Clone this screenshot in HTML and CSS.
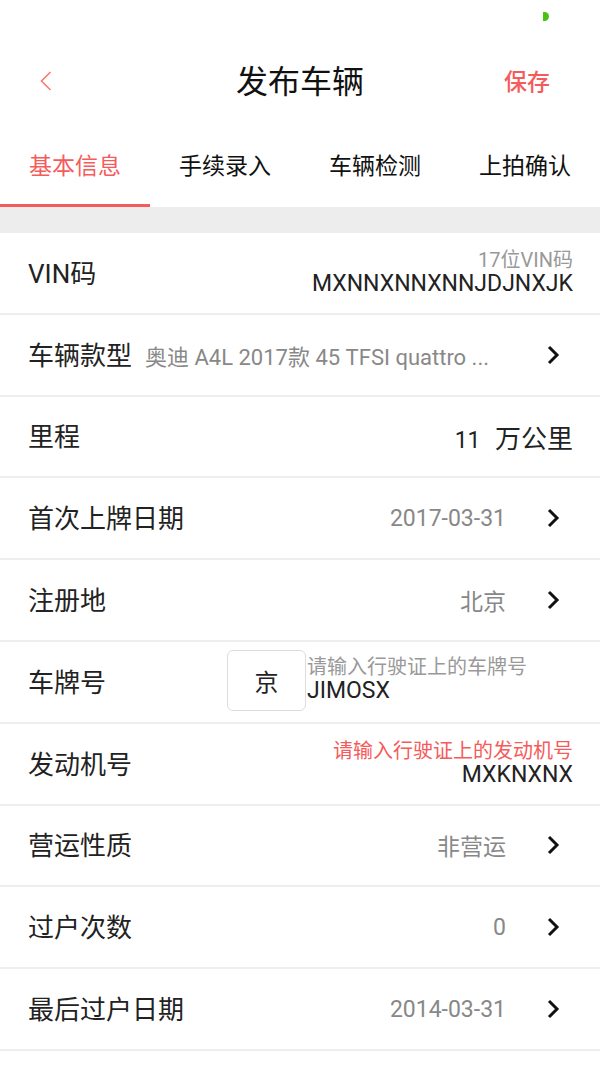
FILE: index.html
```html
<!DOCTYPE html>
<html lang="zh-CN">
<head>
  <meta charset="UTF-8">
  <title>发布车辆</title>
  <link rel="stylesheet" href="styles.css">
</head>
<body>
  <div class="statusbar">
    <span class="battery"></span>
  </div>

  <div class="header">
    <div class="back">
      <svg width="12" height="20" viewBox="0 0 12 20">
        <polyline points="10.5,1 1.5,10 10.5,19" fill="none" stroke="#fa7b6c" stroke-width="1.6"/>
      </svg>
    </div>
    <h1>发布车辆</h1>
    <div class="save">保存</div>
  </div>

  <div class="tabs">
    <div class="tab active">基本信息</div>
    <div class="tab">手续录入</div>
    <div class="tab">车辆检测</div>
    <div class="tab">上拍确认</div>
  </div>

  <div class="gap"></div>

  <div class="form">
    <div class="row">
      <span class="label">VIN码</span>
      <div class="stack">
        <span class="hint">17位VIN码</span>
        <span class="input">MXNNXNNXNNJDJNXJK</span>
      </div>
    </div>

    <div class="row">
      <span class="label tight">车辆款型</span>
      <span class="value model">奥迪 A4L 2017款 45 TFSI quattro ...</span>
      <svg class="arrow" width="14" height="22" viewBox="0 0 14 22">
        <polyline points="3,3 11,11 3,19" fill="none" stroke="#111" stroke-width="3"/>
      </svg>
    </div>

    <div class="row">
      <span class="label">里程</span>
      <span class="mileage"><b>11</b> 万公里</span>
    </div>

    <div class="row">
      <span class="label">首次上牌日期</span>
      <span class="value">2017-03-31</span>
      <svg class="arrow" width="14" height="22" viewBox="0 0 14 22">
        <polyline points="3,3 11,11 3,19" fill="none" stroke="#111" stroke-width="3"/>
      </svg>
    </div>

    <div class="row">
      <span class="label">注册地</span>
      <span class="value">北京</span>
      <svg class="arrow" width="14" height="22" viewBox="0 0 14 22">
        <polyline points="3,3 11,11 3,19" fill="none" stroke="#111" stroke-width="3"/>
      </svg>
    </div>

    <div class="row">
      <span class="label plate-label">车牌号</span>
      <div class="province">京</div>
      <div class="stack left">
        <span class="hint">请输入行驶证上的车牌号</span>
        <span class="input">JIMOSX</span>
      </div>
    </div>

    <div class="row">
      <span class="label">发动机号</span>
      <div class="stack">
        <span class="hint warn">请输入行驶证上的发动机号</span>
        <span class="input">MXKNXNX</span>
      </div>
    </div>

    <div class="row">
      <span class="label">营运性质</span>
      <span class="value">非营运</span>
      <svg class="arrow" width="14" height="22" viewBox="0 0 14 22">
        <polyline points="3,3 11,11 3,19" fill="none" stroke="#111" stroke-width="3"/>
      </svg>
    </div>

    <div class="row">
      <span class="label">过户次数</span>
      <span class="value">0</span>
      <svg class="arrow" width="14" height="22" viewBox="0 0 14 22">
        <polyline points="3,3 11,11 3,19" fill="none" stroke="#111" stroke-width="3"/>
      </svg>
    </div>

    <div class="row">
      <span class="label">最后过户日期</span>
      <span class="value">2014-03-31</span>
      <svg class="arrow" width="14" height="22" viewBox="0 0 14 22">
        <polyline points="3,3 11,11 3,19" fill="none" stroke="#111" stroke-width="3"/>
      </svg>
    </div>
  </div>
</body>
</html>
```

FILE: styles.css
```css
body {
  margin: 0;
  padding: 0;
  background: #fff;
  font-family: Roboto, "Noto Sans CJK SC", sans-serif;
  color: #222;
  width: 600px;
  overflow: hidden;
}

/* 状态栏 */
.statusbar {
  height: 40px;
  position: relative;
}
.battery {
  position: absolute;
  left: 543px;
  top: 12px;
  width: 6px;
  height: 9px;
  background: #4cc010;
  border-radius: 0 5px 5px 0;
}

/* 标题栏 */
.header {
  height: 82px;
  display: flex;
  align-items: center;
  padding-bottom: 5px;
  box-sizing: border-box;
}
.back {
  width: 110px;
  padding-left: 40px;
  box-sizing: border-box;
  display: flex;
  align-items: center;
  margin-top: 4px;
}
.header h1 {
  flex: 1;
  margin: 0;
  text-align: center;
  font-size: 32px;
  font-weight: 400;
  color: #111;
}
.save {
  width: 110px;
  padding-right: 50px;
  box-sizing: border-box;
  text-align: right;
  font-size: 23px;
  font-weight: 500;
  color: #f65b5b;
  margin-top: 2px;
}

/* 选项卡 */
.tabs {
  display: flex;
  height: 85px;
}
.tab {
  flex: 1;
  text-align: center;
  font-size: 23px;
  line-height: 30px;
  padding-top: 30px;
  box-sizing: border-box;
  color: #111;
  border-bottom: 3px solid transparent;
}
.tab.active {
  color: #f65b5b;
  border-bottom-color: #f65b5b;
}

.gap {
  height: 26px;
  background: #ededed;
}

/* 表单行 */
.row {
  height: 79.8px;
  border-bottom: 2px solid #eeeeee;
  display: flex;
  align-items: center;
  padding: 0 27px 0 28px;
}
.label {
  font-size: 26px;
  color: #222;
  white-space: nowrap;
  margin-right: auto;
  margin-top: -3px;
}
.label.tight {
  margin-right: 0;
}
.plate-label {
  width: 199px;
  margin-right: 0;
}
.value {
  font-size: 23px;
  color: #888;
  white-space: nowrap;
}
.value.model {
  font-size: 22px;
  margin-left: 13px;
  margin-right: auto;
}
.arrow {
  margin-left: 40px;
  margin-right: 13px;
  flex-shrink: 0;
}
.mileage {
  font-size: 26px;
  color: #222;
}
.mileage b {
  font-weight: 400;
  font-size: 23px;
  margin-right: 8px;
}

.stack {
  display: flex;
  flex-direction: column;
  align-items: flex-end;
  margin-top: -2px;
}
.stack.left {
  align-items: flex-start;
  margin-right: auto;
  margin-top: -5px;
}
.hint {
  font-size: 20px;
  line-height: 24px;
  color: #999;
}
.hint.warn {
  color: #f65b5b;
}
.input {
  font-size: 23px;
  line-height: 24px;
  color: #222;
}

.province {
  width: 79px;
  height: 61px;
  border: 1px solid #dddddd;
  border-radius: 6px;
  box-sizing: border-box;
  display: flex;
  align-items: center;
  justify-content: center;
  font-size: 24px;
  color: #222;
  margin-right: 1px;
  margin-top: -3px;
}
```
